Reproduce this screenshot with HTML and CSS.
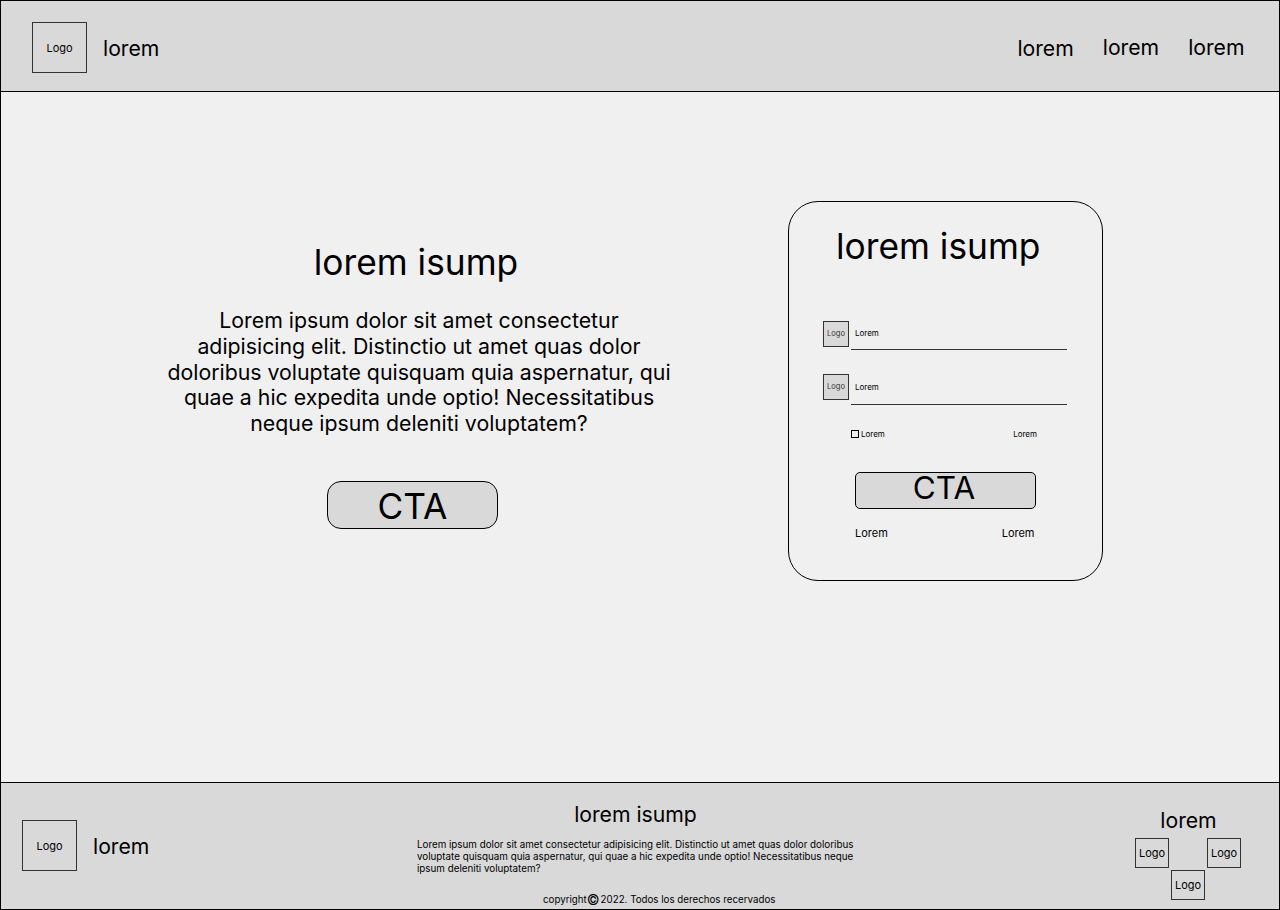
FILE: index.html
```html
<!DOCTYPE html>
<html lang="es">
<head>
    <meta charset="UTF-8">
    <meta name="viewport" content="width=device-width, initial-scale=1.0">
    <title>Wireframe</title>
    <link rel="stylesheet" href="styles.css">
</head>
<body>

    <header class="site-header">
        <div class="logo logo-big">Logo</div>
        <span class="brand">lorem</span>
        <nav class="nav">
            <a class="nav-first">lorem</a>
            <a>lorem</a>
            <a>lorem</a>
        </nav>
    </header>

    <main class="site-main">
        <!-- Hero -->
        <section class="hero">
            <h1>lorem isump</h1>
            <p>Lorem ipsum dolor sit amet consectetur adipisicing elit. Distinctio ut amet quas dolor doloribus voluptate quisquam quia aspernatur, qui quae a hic expedita unde optio! Necessitatibus neque ipsum deleniti voluptatem?</p>
            <button type="button" class="btn btn-hero">CTA</button>
        </section>

        <!-- Login -->
        <form class="card">
            <h2>lorem isump</h2>
            <div class="field field-one">
                <div class="logo logo-field">Logo</div>
                <div class="field-line">Lorem</div>
            </div>
            <div class="field field-two">
                <div class="logo logo-field">Logo</div>
                <div class="field-line">Lorem</div>
            </div>
            <div class="remember">
                <label><span class="check"></span>Lorem</label>
                <a>Lorem</a>
            </div>
            <button type="button" class="btn btn-card">CTA</button>
            <div class="card-links">
                <a>Lorem</a>
                <a>Lorem</a>
            </div>
        </form>
    </main>

    <footer class="site-footer">
        <div class="logo logo-big">Logo</div>
        <span class="brand">lorem</span>
        <div class="foot-center">
            <h3>lorem isump</h3>
            <p>Lorem ipsum dolor sit amet consectetur adipisicing elit. Distinctio ut amet quas dolor doloribus voluptate quisquam quia aspernatur, qui quae a hic expedita unde optio! Necessitatibus neque ipsum deleniti voluptatem?</p>
            <small>copyright<span class="copy">©</span>2022. Todos los derechos recervados</small>
        </div>
        <div class="foot-social">
            <h4>lorem</h4>
            <div class="social-grid">
                <div class="logo logo-social">Logo</div>
                <div class="logo logo-social social-right">Logo</div>
                <div class="logo logo-social social-mid">Logo</div>
            </div>
        </div>
    </footer>

</body>
</html>
```

FILE: styles.css
```css
* {margin: 0; padding: 0; box-sizing: border-box; font-family: 'Inter', sans-serif;}

body {
    width: 1280px;
    height: 910px;
    display: flex;
    flex-direction: column;
    overflow: hidden;
    color: #000;
    background: #f0f0f0;
}

.logo {
    display: flex;
    justify-content: center;
    align-items: center;
    flex-shrink: 0;
    border: 1px solid #333;
    background: #d9d9d9;
}

.logo-big {
    width: 55px;
    height: 51px;
    font-size: 11px;
}

.brand {
    font-size: 21.2px;
    line-height: 24px;
}

/* Header */
.site-header {
    height: 92px;
    display: flex;
    align-items: center;
    padding: 2px 34.5px 0 31px;
    border: 1px solid #000;
    background: #d9d9d9;
}

.site-header .logo-big {
    padding-top: 2px;
}

.site-header .brand {
    margin: 2px 0 0 16px;
}

.nav {
    display: flex;
    gap: 29px;
    margin: 0 0 0 auto;
    font-size: 21.2px;
    line-height: 24px;
}

.nav-first {
    margin-top: 1px;
}

/* Main */
.site-main {
    height: 690px;
    display: flex;
    align-items: flex-start;
    padding: 109px 0 0 165px;
    border-left: 1px solid #000;
    border-right: 1px solid #000;
}

.hero {
    width: 506px;
    margin-top: 40px;
    text-align: center;
}

.hero h1 {
    margin-left: -6px;
    font-size: 35.3px;
    font-weight: 400;
    line-height: 44px;
}

.hero p {
    margin-top: 23px;
    font-size: 21.3px;
    line-height: 25.8px;
}

.btn {
    display: block;
    border: 1px solid #000;
    background: #d9d9d9;
    color: #000;
}

.btn-hero {
    width: 171px;
    height: 48px;
    margin: 44px 0 0 161px;
    padding-top: 3px;
    border-radius: 14px;
    font-size: 35.3px;
    line-height: 44px;
}

/* Card */
.card {
    width: 315px;
    height: 380px;
    margin-left: 116px;
    padding: 23px 34px 0 34px;
    border: 1px solid #000;
    border-radius: 30px;
}

.card h2 {
    margin-left: -2px;
    width: 231px;
    font-size: 35.3px;
    font-weight: 400;
    line-height: 44px;
    white-space: nowrap;
    text-align: left;
    padding-left: 15px;
}

.field {
    display: flex;
    align-items: flex-start;
}

.field-one {
    margin-top: 52px;
    height: 29px;
}

.field-two {
    margin-top: 24px;
    height: 31px;
}

.logo-field {
    width: 26px;
    height: 26px;
    padding-bottom: 1px;
    font-size: 7.5px;
    color: #333;
}

.field-line {
    width: 216px;
    height: 100%;
    margin-left: 2px;
    padding: 6px 0 0 4px;
    border-bottom: 1px solid #333;
    font-size: 8px;
    line-height: 12px;
}

.field-two .field-line {
    padding-top: 7px;
}

.remember {
    display: flex;
    justify-content: space-between;
    width: 186px;
    margin: 23px 0 0 28px;
    font-size: 8px;
    line-height: 12px;
}

.check {
    display: inline-block;
    width: 8px;
    height: 8px;
    margin-right: 2px;
    border: 1px solid #000;
    vertical-align: -1px;
}

.btn-card {
    width: 181px;
    height: 37px;
    margin: 32px 0 0 32px;
    border-radius: 5px;
    font-size: 31.5px;
    line-height: 30px;
    padding: 0 3px 5px 0;
}

.card-links {
    display: flex;
    justify-content: space-between;
    width: 179.5px;
    margin: 17px 0 0 32px;
    font-size: 11px;
    line-height: 14px;
}

/* Footer */
.site-footer {
    height: 128px;
    display: flex;
    align-items: flex-start;
    padding-left: 21px;
    border: 1px solid #000;
    background: #d9d9d9;
}

.site-footer .logo-big {
    margin-top: 37px;
}

.site-footer .brand {
    width: 324px;
    margin: 51px 0 0 16px;
}

.foot-center {
    width: 437px;
    padding-top: 18px;
}

.foot-center h3 {
    font-size: 21.2px;
    font-weight: 400;
    line-height: 27px;
    text-align: center;
}

.foot-center p {
    margin-top: 11px;
    font-size: 9.8px;
    line-height: 12px;
}

.foot-center small {
    display: block;
    margin: 19px 0 0 126px;
    font-size: 9.75px;
    line-height: 12px;
    white-space: nowrap;
}

.copy {
    font-size: 14px;
    line-height: 10px;
    margin-right: 1px;
    vertical-align: -2px;
}

.foot-social {
    width: 106px;
    margin-left: 281px;
    padding-top: 25px;
    text-align: center;
}

.foot-social h4 {
    margin-left: 1px;
    font-size: 21.2px;
    font-weight: 400;
    line-height: 24px;
}

.social-grid {
    display: grid;
    grid-template-columns: 34px 34px 34px;
    grid-template-rows: 30px 30px;
    column-gap: 2px;
    row-gap: 2px;
    margin-top: 6px;
}

.logo-social {
    font-size: 11px;
}

.social-right {
    grid-column: 3;
}

.social-mid {
    grid-column: 2;
    grid-row: 2;
}
```
